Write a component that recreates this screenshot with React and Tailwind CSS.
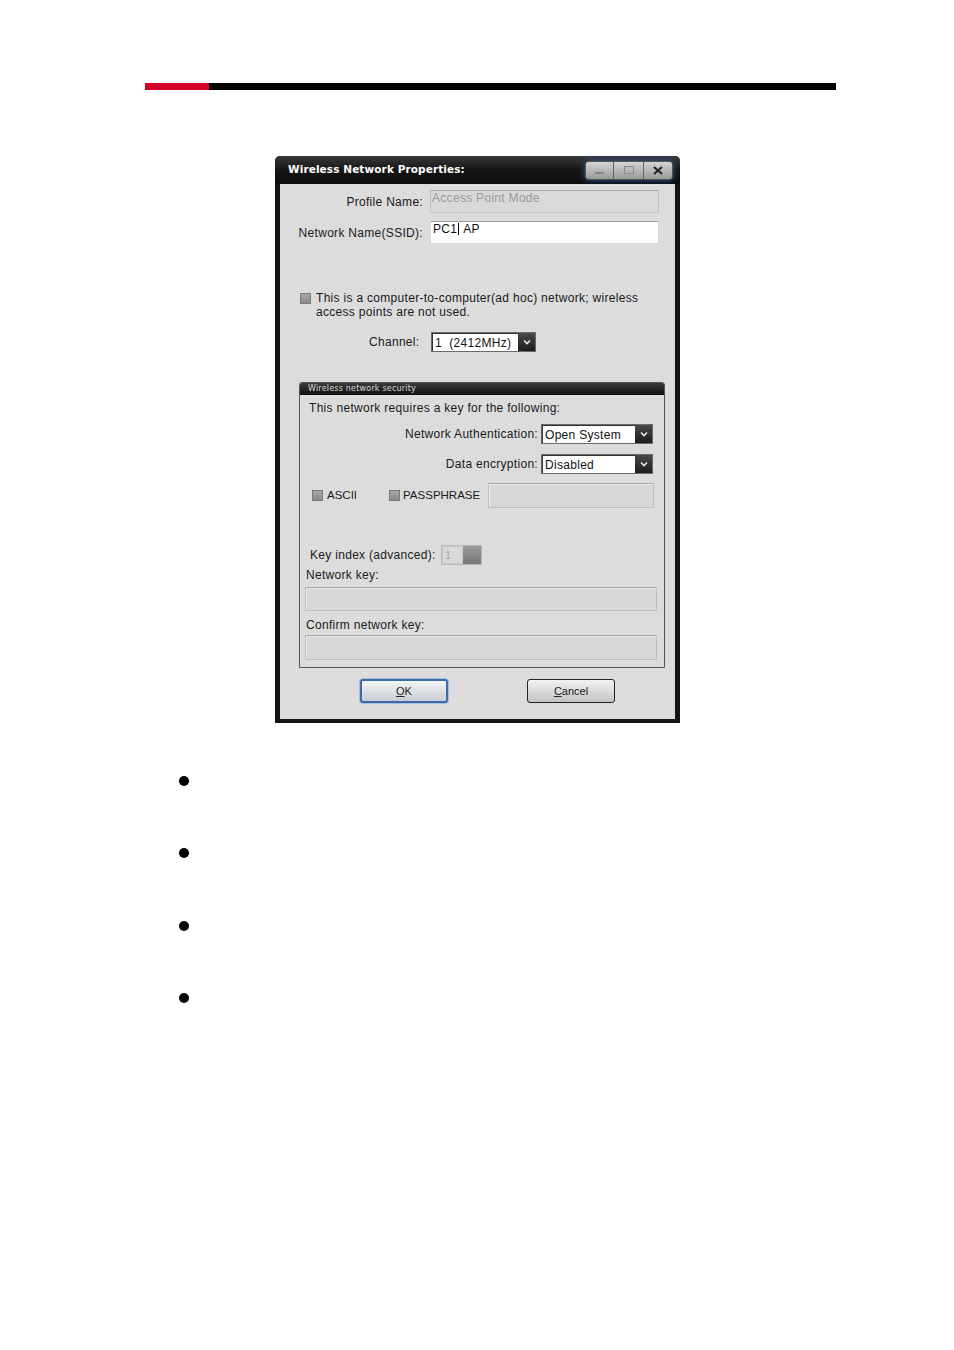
import React from "react";

const F = { fontFamily: '"Liberation Sans", Arial, sans-serif' };

function Check({ className = "" }) {
  return (
    <span
      className={
        "inline-block w-[11px] h-[11px] border border-[#7a7a7a] bg-gradient-to-b from-[#a8a8a8] to-[#8a8a8a] shrink-0 " +
        className
      }
    />
  );
}

function Select({ text, w }) {
  return (
    <div className={"flex h-[20px] border border-[#6a6a6a] bg-white " + w}>
      <div className="flex-1 pl-[2px] text-[12px] leading-[18px] text-[#111] border-t border-l border-[#333] whitespace-pre">
        {text}
      </div>
      <div className="w-[17px] bg-gradient-to-b from-[#4a4a4a] to-[#1c1c1c] flex items-center justify-center">
        <svg width="8" height="6" viewBox="0 0 8 6">
          <path d="M1 1.5 L4 4.5 L7 1.5" stroke="#e8e8e8" strokeWidth="1.6" fill="none" />
        </svg>
      </div>
    </div>
  );
}

function DisabledInput({ className = "" }) {
  return (
    <div
      className={
        "border border-[#bdbdbd] border-t-[#a9a9a9] bg-[#d8d8d8] shadow-[inset_1px_1px_0_#ececec] " +
        className
      }
    />
  );
}

export default function App() {
  return (
    <div className="w-[954px] h-[1350px] bg-white relative" style={F}>
      <div className="pt-[83px] pl-[145px]">
        <div className="flex w-[691px] h-[7px]">
          <div className="w-[64px] bg-[#d40028]" />
          <div className="flex-1 bg-black" />
        </div>
      </div>

      <div className="ml-[275px] mt-[66px] w-[405px] h-[567px] bg-[#141414] rounded-t-[5px] flex flex-col px-[5px] pb-[4px]">
        {/* title bar */}
        <div className="h-[28px] flex items-center justify-between bg-gradient-to-b from-[#3a3a3a] via-[#161616] to-[#0c0c0c] -mx-[5px] px-[13px] rounded-t-[5px]">
          <span className="font-bold text-white tracking-[0.1px]" style={{ fontFamily: '"DejaVu Sans", Verdana, sans-serif', fontSize: "10.5px" }}>
            Wireless Network Properties:
          </span>
          <div className="flex h-[19px] mr-[-6px] rounded-[3px] border border-[#555] overflow-hidden shadow-[0_0_6px_#2a5a9a]">
            <div className="w-[28px] bg-gradient-to-b from-[#d4d4d4] to-[#9a9a9a] border-r border-[#666] flex items-center justify-center">
              <div className="w-[9px] h-[2px] bg-[#888] mt-[5px]" />
            </div>
            <div className="w-[30px] bg-gradient-to-b from-[#d4d4d4] to-[#9a9a9a] border-r border-[#666] flex items-center justify-center">
              <div className="w-[10px] h-[8px] border border-[#8c8c8c]" />
            </div>
            <div className="w-[28px] bg-gradient-to-b from-[#d4d4d4] to-[#9a9a9a] flex items-center justify-center">
              <svg width="10" height="9" viewBox="0 0 10 9">
                <path d="M1 1 L9 8 M9 1 L1 8" stroke="#222" strokeWidth="2" />
              </svg>
            </div>
          </div>
        </div>

        {/* client */}
        <div className="flex-1 bg-[#dcdcdc] flex flex-col text-[12px] text-[#1a1a1a] tracking-[0.3px]">
          <div className="flex items-center mt-[6px] h-[23px]">
            <div className="w-[143px] text-right">Profile Name:</div>
            <div className="ml-[7px] w-[229px] h-[23px] border border-[#c4c4c4] border-t-[#a8a8a8] bg-[#d9d9d9] text-[#9a9a9a] pl-[1px] leading-[14px]">
              Access Point Mode
            </div>
          </div>
          <div className="flex items-center mt-[8px] h-[23px]">
            <div className="w-[143px] text-right">Network Name(SSID):</div>
            <div className="ml-[7px] w-[229px] h-[23px] border border-[#d8d8d8] border-t-[#9a9a9a] bg-white pl-[2px] leading-[14px] text-[#111]">
              PC1<span className="inline-block w-px h-[12px] bg-black align-[-2px] mx-[1px]" /> AP
            </div>
          </div>

          <div className="flex mt-[47px] ml-[20px]">
            <Check className="mt-[2px]" />
            <div className="ml-[5px] leading-[14px] w-[345px]">
              This is a computer-to-computer(ad hoc) network; wireless access points are not used.
            </div>
          </div>

          <div className="flex items-center mt-[13px] ml-[89px]">
            <span className="w-[62px]">Channel:</span>
            <Select text="1  (2412MHz)" w="w-[105px]" />
          </div>

          {/* group */}
          <div className="mt-[30px] ml-[19px] w-[366px] h-[286px] border border-[#555] rounded-t-[3px] flex flex-col">
            <div className="h-[12px] bg-gradient-to-b from-[#3a3a3a] to-[#111] rounded-t-[2px] flex items-center">
              <span className="text-[#d8d8d8] pl-[8px] leading-[10px] tracking-[0.2px]" style={{ fontFamily: '"DejaVu Sans", Verdana, sans-serif', fontSize: "8px" }}>
                Wireless network security
              </span>
            </div>
            <div className="ml-[9px] mt-[6px] leading-[14px]">This network requires a key for the following:</div>
            <div className="flex items-center justify-end mt-[9px] mr-[11px]">
              <span className="mr-[3px]">Network Authentication:</span>
              <Select text="Open System" w="w-[112px]" />
            </div>
            <div className="flex items-center justify-end mt-[10px] mr-[11px]">
              <span className="mr-[3px]">Data encryption:</span>
              <Select text="Disabled" w="w-[112px]" />
            </div>
            <div className="flex items-center mt-[9px] h-[25px] tracking-normal">
              <Check className="ml-[12px]" />
              <span className="ml-[4px] text-[11.5px]">ASCII</span>
              <Check className="ml-[32px]" />
              <span className="ml-[3px] text-[11.5px]">PASSPHRASE</span>
              <DisabledInput className="ml-auto mr-[10px] w-[166px] h-[25px]" />
            </div>
            <div className="flex items-center mt-[37px] h-[20px]">
              <span className="ml-[10px] w-[131px]">Key index (advanced):</span>
              <div className="flex h-[20px] w-[41px] border border-[#b8b8b8]">
                <div className="flex-1 bg-[#d8d8d8] text-[11px] text-[#aaa] pl-[2px] leading-[17px] border border-[#c9c9c9]">1</div>
                <div className="w-[18px] bg-gradient-to-b from-[#9a9a9a] to-[#777]" />
              </div>
            </div>
            <div className="ml-[6px] mt-[1px] leading-[18px]">Network key:</div>
            <DisabledInput className="ml-[5px] mt-[3px] w-[352px] h-[24px]" />
            <div className="ml-[6px] mt-[5px] leading-[18px]">Confirm network key:</div>
            <DisabledInput className="ml-[5px] mt-[1px] w-[352px] h-[25px]" />
          </div>

          <div className="flex mt-[11px] ml-[80px] tracking-normal">
            <div className="w-[88px] h-[24px] rounded-[3px] border-2 border-[#3d6aa6] bg-gradient-to-b from-[#f4f4f4] to-[#c9ced6] flex items-center justify-center text-[11px] text-[#222] shadow-[0_0_0_1px_#a8c0e0]">
              <span><span className="underline">O</span>K</span>
            </div>
            <div className="ml-[79px] w-[88px] h-[24px] rounded-[3px] border border-[#222] bg-gradient-to-b from-[#f2f2f2] to-[#c4c4c4] flex items-center justify-center text-[11px] text-[#222]">
              <span><span className="underline">C</span>ancel</span>
            </div>
          </div>
        </div>
      </div>

      <div className="ml-[179px] mt-[53px] flex flex-col">
        <div className="w-[10px] h-[10px] rounded-full bg-black" />
        <div className="w-[10px] h-[10px] rounded-full bg-black mt-[62px]" />
        <div className="w-[10px] h-[10px] rounded-full bg-black mt-[63px]" />
        <div className="w-[10px] h-[10px] rounded-full bg-black mt-[62px]" />
      </div>
    </div>
  );
}
